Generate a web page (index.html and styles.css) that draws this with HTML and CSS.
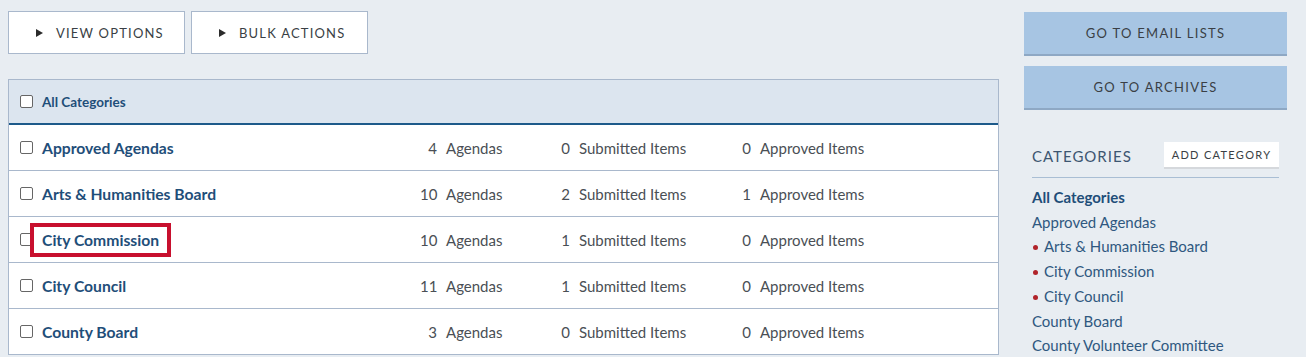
FILE: index.html
```html
<!DOCTYPE html>
<html lang="en">
<head>
  <meta charset="UTF-8" />
  <title>Agenda Categories</title>
  <link rel="stylesheet" href="styles.css">
</head>
<body>
  <div class="page">
    <div class="main">
      <div class="toolbar">
        <button class="tool-btn"><span class="tri"></span>VIEW OPTIONS</button>
        <button class="tool-btn"><span class="tri"></span>BULK ACTIONS</button>
      </div>
      <div class="cat-table">
        <div class="cat-head">
          <span class="box"></span>
          <span class="head-title">All Categories</span>
        </div>
        <div class="cat-row">
          <div class="name"><span class="box"></span><a>Approved Agendas</a></div>
          <div class="stat s1"><span class="n">4</span>Agendas</div>
          <div class="stat s2"><span class="n">0</span>Submitted Items</div>
          <div class="stat s3"><span class="n">0</span>Approved Items</div>
        </div>
        <div class="cat-row">
          <div class="name"><span class="box"></span><a>Arts &amp; Humanities Board</a></div>
          <div class="stat s1"><span class="n">10</span>Agendas</div>
          <div class="stat s2"><span class="n">2</span>Submitted Items</div>
          <div class="stat s3"><span class="n">1</span>Approved Items</div>
        </div>
        <div class="cat-row">
          <div class="name"><span class="box"></span><a class="marked">City Commission</a></div>
          <div class="stat s1"><span class="n">10</span>Agendas</div>
          <div class="stat s2"><span class="n">1</span>Submitted Items</div>
          <div class="stat s3"><span class="n">0</span>Approved Items</div>
        </div>
        <div class="cat-row">
          <div class="name"><span class="box"></span><a>City Council</a></div>
          <div class="stat s1"><span class="n">11</span>Agendas</div>
          <div class="stat s2"><span class="n">1</span>Submitted Items</div>
          <div class="stat s3"><span class="n">0</span>Approved Items</div>
        </div>
        <div class="cat-row">
          <div class="name"><span class="box"></span><a>County Board</a></div>
          <div class="stat s1"><span class="n">3</span>Agendas</div>
          <div class="stat s2"><span class="n">0</span>Submitted Items</div>
          <div class="stat s3"><span class="n">0</span>Approved Items</div>
        </div>
      </div>
    </div>
    <div class="side">
      <button class="side-btn">GO TO EMAIL LISTS</button>
      <button class="side-btn">GO TO ARCHIVES</button>
      <div class="side-head">
        <h3>CATEGORIES</h3>
        <button class="add-btn">ADD CATEGORY</button>
      </div>
      <ul class="side-list">
        <li class="current">All Categories</li>
        <li>Approved Agendas</li>
        <li class="dot">Arts &amp; Humanities Board</li>
        <li class="dot">City Commission</li>
        <li class="dot">City Council</li>
        <li>County Board</li>
        <li>County Volunteer Committee</li>
      </ul>
    </div>
  </div>
</body>
</html>
```

FILE: styles.css
```css
body {
  margin: 0;
  background: #e8edf2;
  font-family: "Lato", "Open Sans", sans-serif;
  color: #333;
  overflow: hidden;
}
button {
  font-family: inherit;
  cursor: pointer;
}
.page {
  display: flex;
  gap: 25px;
  padding: 11px 19px 0 8px;
}
.main {
  width: 991px;
}
.toolbar {
  display: flex;
  gap: 6px;
  margin-bottom: 25px;
}
.tool-btn {
  width: 177px;
  height: 43px;
  background: #fff;
  border: 1px solid #a9b8cc;
  font-size: 13px;
  letter-spacing: 1.2px;
  color: #3a3f45;
  display: flex;
  align-items: center;
  padding: 0 0 0 27px;
}
.tool-btn .tri {
  width: 0;
  height: 0;
  border-top: 4px solid transparent;
  border-bottom: 4px solid transparent;
  border-left: 7px solid #2b2b2b;
  margin-right: 13px;
}
.cat-table {
  border: 1px solid #a9b8cc;
  border-bottom: none;
  background: #fff;
}
.cat-head {
  height: 43px;
  background: #dce5ef;
  border-bottom: 2px solid #1d5a8a;
  display: flex;
  align-items: center;
  padding-left: 11px;
}
.head-title {
  font-size: 13.5px;
  font-weight: bold;
  color: #1f4e79;
}
.box {
  width: 11px;
  height: 11px;
  border: 1px solid #666;
  border-radius: 2px;
  background: #fff;
  margin-right: 9px;
  flex: none;
}
.cat-row {
  height: 45px;
  border-bottom: 1px solid #a9b8cc;
  display: flex;
  align-items: center;
  padding-left: 11px;
  font-size: 15px;
  color: #4a4f55;
}
.name {
  width: 400px;
  display: flex;
  align-items: center;
}
.name a {
  font-size: 15.7px;
  font-weight: bold;
  color: #1f4e79;
}
.name a.marked {
  outline: 4px solid #c8102e;
  padding: 4px 8px;
  margin: -4px -8px;
  position: relative;
}
.stat {
  display: flex;
}
.stat .n {
  width: 17px;
  text-align: right;
  margin-right: 9px;
}
.s1 {
  width: 133px;
}
.s2 {
  width: 181px;
}
.side {
  width: 263px;
  padding-top: 1px;
}
.side-btn {
  display: block;
  width: 100%;
  height: 44px;
  background: #a7c5e3;
  border: none;
  border-bottom: 2px solid #8ea8c4;
  font-size: 13px;
  letter-spacing: 1.3px;
  color: #3a3f45;
  margin-bottom: 10px;
}
.side-head {
  display: flex;
  justify-content: space-between;
  align-items: center;
  margin: 32px 8px 0 8px;
  padding-bottom: 8px;
  border-bottom: 1px solid #a9bed4;
}
.side-head h3 {
  margin: 0;
  font-size: 15px;
  font-weight: normal;
  letter-spacing: 1px;
  color: #3d5671;
}
.add-btn {
  background: #fff;
  border: none;
  border-bottom: 2px solid #d5d8dc;
  height: 27px;
  width: 115px;
  font-size: 11px;
  letter-spacing: 1.3px;
  color: #3a3f45;
}
.side-list {
  list-style: none;
  margin: 7px 8px 0 8px;
  padding: 0;
}
.side-list li {
  font-size: 15px;
  line-height: 24.7px;
  color: #2f5880;
}
.side-list li.current {
  font-weight: bold;
  color: #1f4e79;
}
.side-list li.dot::before {
  content: "";
  display: inline-block;
  width: 5px;
  height: 5px;
  border-radius: 50%;
  background: #b0232a;
  margin: 0 6px 2px 1px;
  vertical-align: middle;
}
```
